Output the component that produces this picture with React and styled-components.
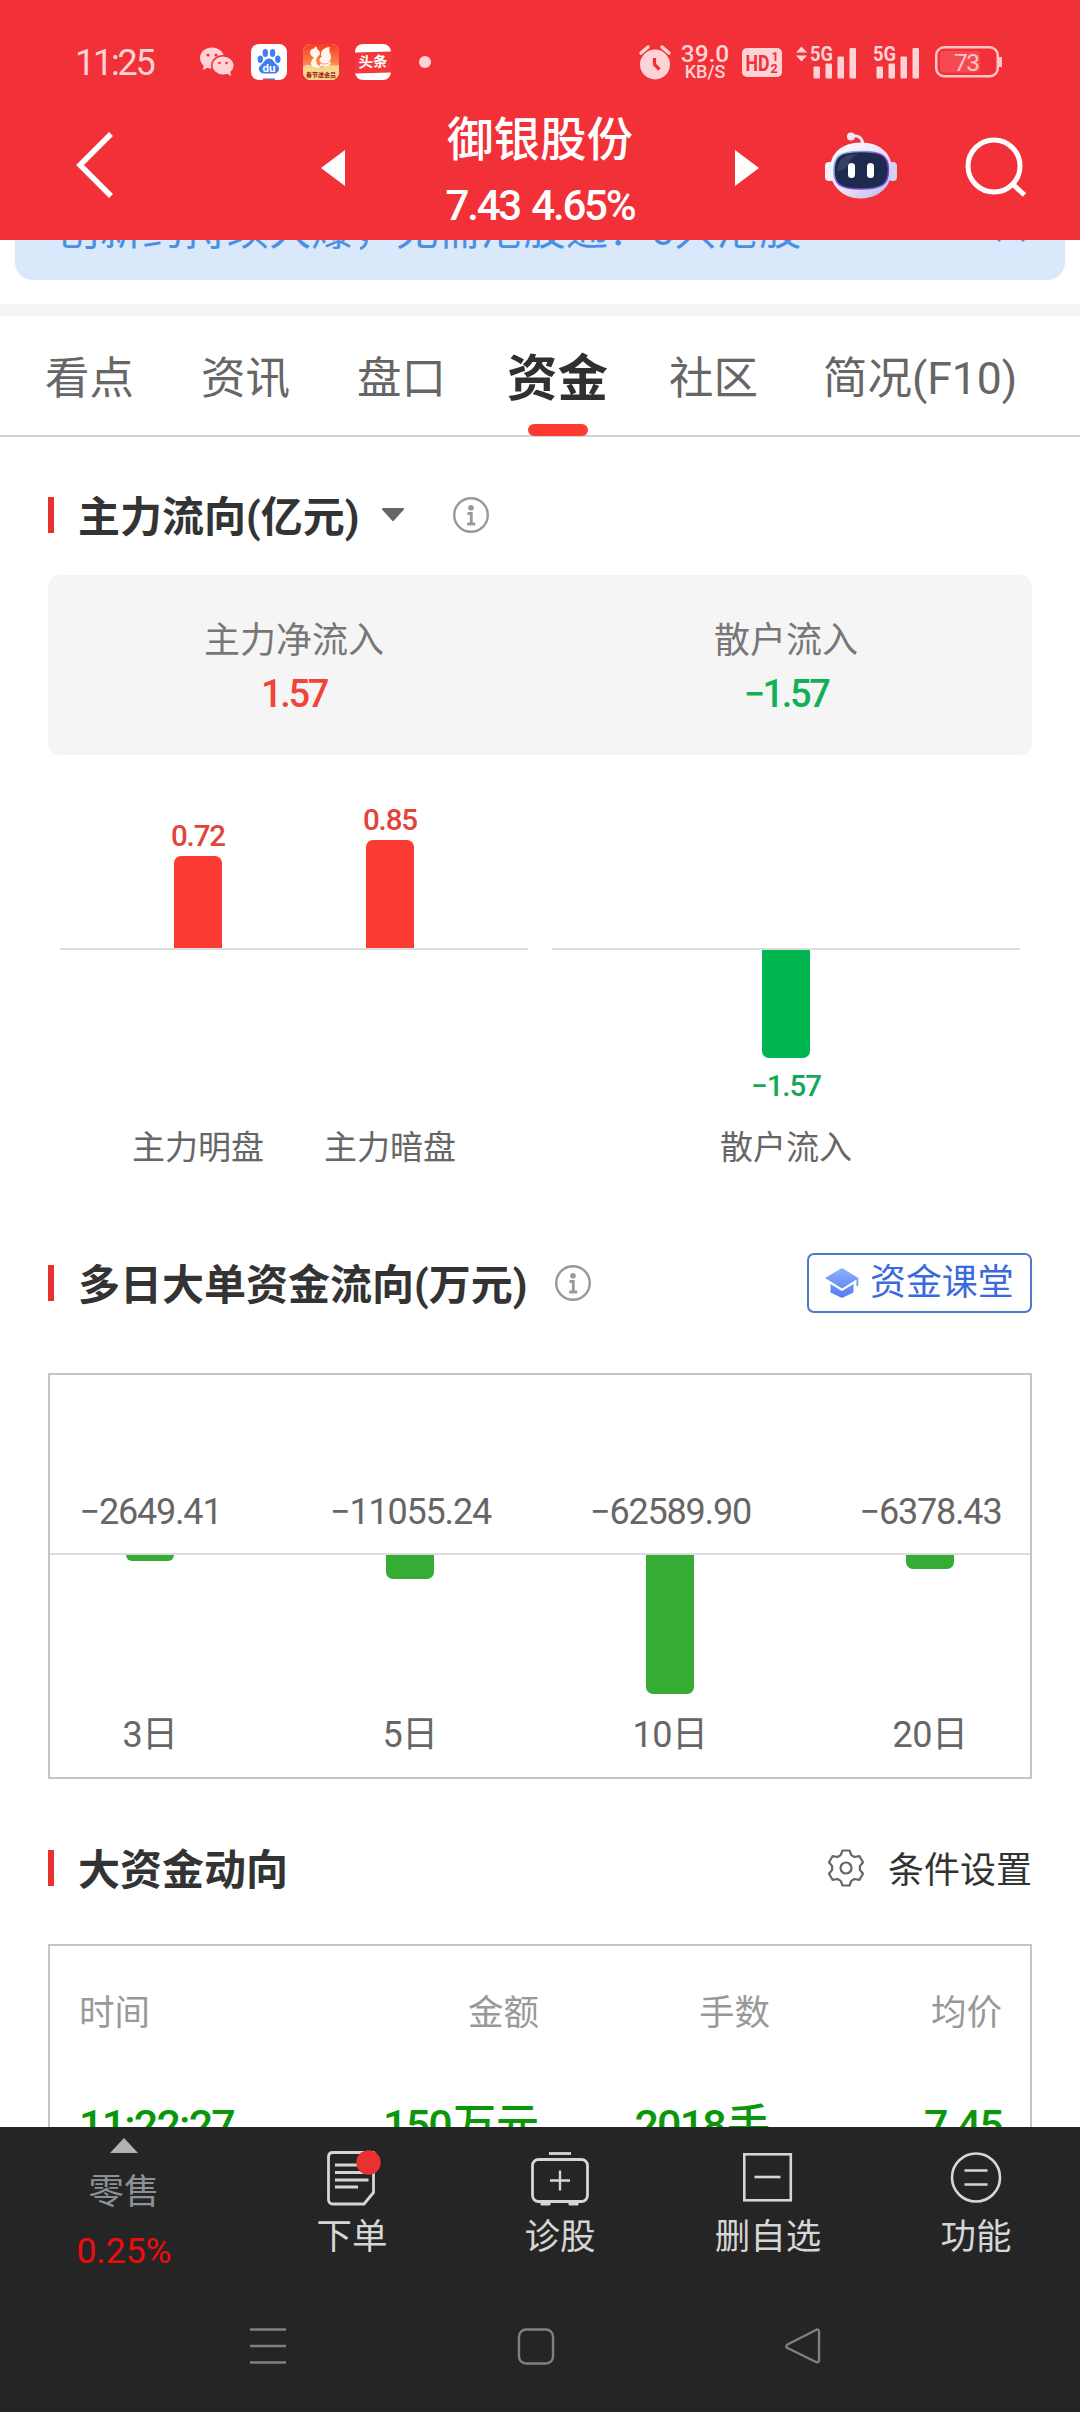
import React from 'react';
import styled, { createGlobalStyle } from 'styled-components';

const GlobalStyle = createGlobalStyle`
  *, *::before, *::after { box-sizing: border-box; }
  body { margin: 0; background: #fff; }
  svg { display: block; flex: none; overflow: visible; }
`;

const Screen = styled.div`
  width: 1080px;
  height: 2412px;
  display: flex;
  flex-direction: column;
  overflow: hidden;
  background: #fff;
  color: #333;
  font-family: Roboto, 'Noto Sans CJK SC', sans-serif;
  white-space: nowrap;
`;

/* ---------- status bar and title ---------- */

const Top = styled.header`
  height: 240px;
  flex: none;
  background: #f23038;
  color: #fff;
`;

const StatusBar = styled.div`
  height: 104px;
  padding: 20px 77px 0 75px;
  display: flex;
  align-items: center;
  justify-content: space-between;
  color: #ffd3d5;
`;

const StatusGroup = styled.div`
  display: flex;
  align-items: center;
  gap: ${(p) => p.$gap || 0}px;
`;

const Clock = styled.span`
  width: 86px;
  margin-right: 38px;
  padding-top: 2px;
  font-size: 36px;
  line-height: 40px;
  letter-spacing: -2.2px;
`;

const Dot = styled.i`
  width: 12px;
  height: 12px;
  margin-left: 12px;
  border-radius: 50%;
  background: #ffd3d5;
`;

const AppTile = styled.span`
  width: 36px;
  height: 36px;
  border-radius: 8px;
  overflow: hidden;
  background: #fff;
`;

const ToutiaoTile = styled(AppTile)`
  display: flex;
  align-items: center;
`;

const ToutiaoBand = styled.span`
  width: 36px;
  height: 21px;
  background: #f2383c;
  color: #fff;
  font-size: 14.5px;
  font-weight: 700;
  line-height: 22px;
  text-align: center;
  transform: skewY(-1.5deg);
`;

const Speed = styled.span`
  width: 50px;
  display: flex;
  flex-direction: column;
  align-items: center;
  font-weight: 500;
`;

const SpeedValue = styled.span`
  font-size: 24.5px;
  line-height: 19px;
`;

const SpeedUnit = styled.span`
  font-size: 18px;
  line-height: 17px;
`;

const TitleBar = styled.div`
  height: 136px;
  display: grid;
  grid-template-columns: 321px 24px 390px 24px 66px 72px 54px 129px;
  align-items: start;
`;

const Slot = styled.div`
  padding-top: ${(p) => p.$top}px;
  padding-left: ${(p) => p.$left || 0}px;
`;

const StockTitle = styled.div`
  display: flex;
  flex-direction: column;
  align-items: center;
  padding-top: 6px;
`;

const StockName = styled.div`
  font-size: 46.5px;
  font-weight: 500;
  line-height: 60px;
`;

const StockPrice = styled.div`
  margin-top: 7px;
  font-size: 42px;
  font-weight: 500;
  line-height: 58px;
  letter-spacing: -2.2px;
  word-spacing: 3px;
`;

/* ---------- scrolled content ---------- */

const Content = styled.main`
  height: 1887px;
  flex: none;
  overflow: hidden;
`;

const Notice = styled.div`
  height: 40px;
  margin: 0 15px;
  padding: 0 40px 0 42px;
  display: flex;
  align-items: flex-end;
  justify-content: space-between;
  overflow: hidden;
  border-radius: 0 0 18px 18px;
  background: #d9e8fb;
  color: #4a90e2;
`;

const NoticeText = styled.span`
  font-size: 42.4px;
  line-height: 50px;
  margin-bottom: 24px;
`;

const NoticeClose = styled.span`
  margin-bottom: 38px;
`;

const Divider = styled.div`
  height: 12px;
  margin-top: 24px;
  background: #f4f4f4;
`;

const Tabs = styled.nav`
  height: 121px;
  padding-left: 45px;
  display: grid;
  grid-template-columns: 156px 156px 150px 162px 154px auto;
  border-bottom: 2px solid #d2d2d2;
`;

const Tab = styled.a`
  height: 120px;
  display: flex;
  flex-direction: column;
  justify-self: start;
  align-items: center;
  color: ${(p) => (p.$active ? '#303030' : '#666')};
  font-size: ${(p) => (p.$active ? 50.5 : 44.5)}px;
  font-weight: ${(p) => (p.$active ? 700 : 400)};
  line-height: 126px;

  &::after {
    content: '';
    width: 60px;
    height: 12px;
    margin-top: -18px;
    border-radius: 6px;
    background: ${(p) => (p.$active ? '#fc3c32' : 'transparent')};
  }
`;

const SectionHead = styled.div`
  height: 60px;
  margin: ${(p) => p.$top}px 48px 0;
  display: flex;
  align-items: center;
`;

const Mark = styled.i`
  width: 6px;
  height: 36px;
  margin-right: 24px;
  background: #e83232;
`;

const SectionTitle = styled.h2`
  margin: 6px 0 0;
  font-size: 42px;
  font-weight: 700;
  line-height: 60px;
  color: #333;
`;

const Gap = styled.span`
  width: ${(p) => p.$w}px;
  flex: none;
`;

const Push = styled.span`
  flex: 1;
`;

const ClassButton = styled.button`
  width: 225px;
  height: 60px;
  padding: 0 0 0 16px;
  display: flex;
  align-items: center;
  gap: 11px;
  border: 2px solid #4d78cc;
  border-radius: 7px;
  background: #fff;
  color: #3b69de;
  font: inherit;
  font-size: 35.9px;
  line-height: 56px;
`;

const SettingLink = styled.a`
  display: flex;
  align-items: center;
  gap: 23px;
  font-size: 36px;
  line-height: 44px;
  color: #333;

  span { margin-top: 6px; }
`;

const Summary = styled.div`
  height: 180px;
  margin: 30px 48px 0;
  display: grid;
  grid-template-columns: 1fr 1fr;
  border-radius: 12px;
  background: #f5f5f5;
`;

const SummaryCell = styled.div`
  padding-top: 42px;
  display: flex;
  flex-direction: column;
  align-items: center;
`;

const SummaryLabel = styled.span`
  font-size: 36px;
  line-height: 48px;
  color: #777;
`;

const SummaryValue = styled.span`
  margin-top: 5px;
  font-size: 38px;
  font-weight: 500;
  line-height: 48px;
  letter-spacing: -2.4px;
  color: ${(p) => p.$color};
`;

const FlowCharts = styled.div`
  height: 408px;
  margin: 40px 60px 0;
  display: grid;
  grid-template-columns: 468px 468px;
  gap: 24px;
`;

const FlowChart = styled.div`
  display: grid;
  grid-template-rows: 155px 146px 1fr;
  grid-template-columns: ${(p) => p.$columns};
`;

const Upper = styled.div`
  display: flex;
  flex-direction: column;
  align-items: center;
  justify-content: flex-end;
  border-bottom: 2px solid #dcdcdc;
`;

const Lower = styled.div`
  display: flex;
  flex-direction: column;
  align-items: center;
  gap: 8px;
`;

const Bar = styled.div`
  width: 48px;
  height: ${(p) => p.$h}px;
  flex: none;
  background: ${(p) => p.$color};
  border-radius: ${(p) => (p.$down ? '0 0 7px 7px' : '7px 7px 0 0')};
`;

const BarValue = styled.span`
  font-size: 29.5px;
  font-weight: 500;
  line-height: 40px;
  letter-spacing: -1.1px;
  color: ${(p) => p.$color};
`;

const BarLabel = styled.span`
  padding-top: 30px;
  text-align: center;
  font-size: 33px;
  line-height: 44px;
  color: #666;
`;

const DaysBox = styled.div`
  height: 406px;
  margin: 60px 48px 0;
  border: 2px solid #c4c4c4;
  display: grid;
  grid-template-rows: 180px 148px 1fr;
`;

const DaysRow = styled.div`
  padding-left: 30px;
  display: grid;
  grid-template-columns: repeat(4, 140px);
  gap: 120px;
  align-items: ${(p) => (p.$end ? 'end' : 'start')};
  border-bottom: ${(p) => (p.$end ? '2px solid #dcdcdc' : '0')};
`;

const Center = styled.div`
  display: flex;
  justify-content: center;
`;

const DayValue = styled.span`
  margin-bottom: 19px;
  padding-left: 1px;
  font-size: 36px;
  line-height: 44px;
  letter-spacing: -1.2px;
  color: #666;
`;

const DayLabel = styled.span`
  margin-top: 8px;
  font-size: 36px;
  line-height: 48px;
  letter-spacing: -0.5px;
  color: #666;
`;

const Trades = styled.div`
  height: 400px;
  margin: 46px 48px 0;
  padding: 42px 28px 0 29px;
  border: 2px solid #c4c4c4;
  border-bottom: 0;
`;

const TradeRow = styled.div`
  display: grid;
  grid-template-columns: 230px 230px 231px 232px;
  text-align: right;
  font-size: ${(p) => (p.$head ? 35.5 : 43)}px;
  font-weight: ${(p) => (p.$head ? 400 : 500)};
  line-height: ${(p) => (p.$head ? 50 : 60)}px;
  letter-spacing: ${(p) => (p.$head ? 0 : -1.8)}px;
  margin-bottom: 57px;
  color: ${(p) => (p.$head ? '#999' : '#0a980a')};

  & > :first-child { text-align: left; }
`;

const Unit = styled.span`
  margin-left: 2px;
  letter-spacing: 0;
`;

/* ---------- bottom bars ---------- */

const Bottom = styled.footer`
  height: 285px;
  flex: none;
  background: #252525;
  color: #d6d6d6;
`;

const Actions = styled.div`
  height: 163px;
  display: grid;
  grid-template-columns: 248px repeat(4, 208px);
`;

const Action = styled.div`
  padding-top: 20px;
  display: flex;
  flex-direction: column;
  align-items: center;
  font-size: 35.5px;
  line-height: 48px;
`;

const ActionIcon = styled.div`
  height: 66px;
`;

const Sector = styled.div`
  padding-top: 11px;
  display: flex;
  flex-direction: column;
  align-items: center;
  font-size: 35.5px;
  line-height: 48px;
  color: #8b9197;
`;

const SectorName = styled.span`
  margin-top: 15px;
`;

const SectorChange = styled.span`
  margin-top: 11px;
  color: #f00c0c;
`;

const SystemNav = styled.div`
  padding: 36px 0 0 248px;
  display: flex;
  gap: 228px;
`;

/* ---------- drawings ---------- */

const WeChat = () => (
  <svg width="36" height="30" viewBox="0 0 36 30">
    <ellipse cx="13" cy="11" rx="12" ry="10.5" fill="#ffd3d5" />
    <path d="M5 17l-1 6 6-3z" fill="#ffd3d5" />
    <ellipse cx="24" cy="18.5" rx="11.3" ry="9.8" fill="#ffd3d5" stroke="#f23038" strokeWidth="1.5" />
    <path d="M27 26l5 3-1-6z" fill="#ffd3d5" />
    <g fill="#f23038">
      <circle cx="9" cy="8" r="1.6" /><circle cx="17" cy="8" r="1.6" />
      <circle cx="20.5" cy="16" r="1.3" /><circle cx="27.5" cy="16" r="1.3" />
    </g>
  </svg>
);

const Baidu = () => (
  <svg width="36" height="36" viewBox="0 0 36 36">
    <g fill="#3f7df0">
      <ellipse cx="9.3" cy="15.3" rx="2.7" ry="3.7" />
      <ellipse cx="14.3" cy="9" rx="2.7" ry="3.9" />
      <ellipse cx="21.6" cy="9" rx="2.7" ry="3.9" />
      <ellipse cx="26.8" cy="15.3" rx="2.7" ry="3.7" />
      <path d="M18 14.5c3.500 0 4.500 3 6.500 5s4 3.300 3.500 6-2.500 4-5 4h-10c-2.500 0-4.500-1.300-5-4s1.500-4 3.500-6 3-5 6.500-5z" />
      <path d="M12 36v-1.500h7V36z" fill="#e0405a" /><path d="M18 36v-1.500h6V36z" />
    </g>
    <text x="18" y="27.500" fontFamily="Roboto" fontSize="11.500" fontWeight="700" fill="#fff" textAnchor="middle">du</text>
  </svg>
);

const Squirrel = () => (
  <svg width="36" height="36" viewBox="0 0 36 36">
    <defs>
      <linearGradient id="sq" x1="0" y1="0" x2="0" y2="1">
        <stop offset="0" stopColor="#f73a22" />
        <stop offset=".55" stopColor="#f98a4a" />
        <stop offset="1" stopColor="#fbd98c" />
      </linearGradient>
    </defs>
    <rect width="36" height="36" fill="url(#sq)" />
    <path d="M0 23q4-4 8-1 5 3 11 2 5-4 9-3t8 0v15H0z" fill="#fbd68a" />
    <path d="M7 8.500Q7 5 11 4.500L13 2l1.500 3.500Q18 7.500 16.500 11q-4.500 3.500-3 8 1.500 3.500 6 4-7 2.500-11-1-2-4 2.500-8.500Q7.500 12 7 8.500z" fill="#fff6ec" />
    <path d="M18 9.500q1-6 9-6.500-1.500 4 .5 7 2 6-3 9-6 2-8-2-.5-3 2.500-4.500-1.500-1-1-3z" fill="#fff6ec" />
    <path d="M17 20.500q7 3 10.500-2.500" fill="none" stroke="#fff6ec" strokeWidth="2" />
    <text x="18" y="33" fontFamily="Noto Sans CJK SC" fontSize="6" fontWeight="700" fill="#8c1510" textAnchor="middle">春节送会员</text>
  </svg>
);

const Alarm = () => (
  <svg width="32" height="36" viewBox="0 0 32 36">
    <circle cx="16" cy="20.500" r="15" fill="#ffd3d5" />
    <path d="M2 9l7-6M30 9l-7-6" stroke="#ffd3d5" strokeWidth="3.500" strokeLinecap="round" />
    <path d="M15.500 14v6.500l5 5" fill="none" stroke="#f23038" strokeWidth="3.200" />
  </svg>
);

const HdBadge = () => (
  <svg width="40" height="29" viewBox="0 0 40 29">
    <rect width="40" height="29" rx="5" fill="#ffd3d5" />
    <g fontFamily="Roboto" fontWeight="700" fill="#f23038">
      <text x="3.500" y="22.500" fontSize="22" textLength="24" lengthAdjust="spacingAndGlyphs">HD</text>
      <text x="29.500" y="13" fontSize="12.500">1</text>
      <text x="28.500" y="25" fontSize="12.500">2</text>
    </g>
  </svg>
);

const Signal = ({ arrows }) => (
  <svg width={arrows ? 62 : 48} height="34" viewBox={arrows ? '-14 0 62 34' : '0 0 48 34'}>
    <g fill="#ffd3d5">
      {arrows && <path d="M-14 7.500l5.500-6 5.500 6zM-14 10.500l5.500 6 5.500-6z" />}
      <text x="0" y="16" fontFamily="Roboto" fontSize="20.500" fontWeight="700" textLength="23" lengthAdjust="spacingAndGlyphs">5G</text>
      <rect x="3.500" y="21.500" width="6.500" height="12" rx="1" />
      <rect x="15.500" y="18.500" width="6.500" height="15" rx="1" />
      <rect x="27.500" y="11.500" width="6.500" height="22" rx="1" />
      <rect x="39.500" y="3" width="6.500" height="30.500" rx="1" />
    </g>
  </svg>
);

const Battery = () => (
  <svg width="68" height="32" viewBox="0 0 68 32">
    <rect x="1.250" y="1.250" width="61.500" height="29" rx="8" fill="none" stroke="#ffc4c7" strokeWidth="2.500" />
    <rect x="5" y="5" width="40" height="21.500" rx="4" fill="#f6484f" />
    <path d="M65.500 11v10" stroke="#ffc4c7" strokeWidth="3" />
    <text x="32" y="24.500" fontFamily="Roboto" fontSize="24.500" fill="#ffc4c7" textAnchor="middle" textLength="26">73</text>
  </svg>
);

const Robot = () => (
  <svg width="74" height="68" viewBox="0 0 74 68">
    <defs>
      <linearGradient id="head" x1="0" y1="0" x2="1" y2="1">
        <stop offset="0" stopColor="#fff" />
        <stop offset=".55" stopColor="#e6e2f8" />
        <stop offset="1" stopColor="#b9b4e6" />
      </linearGradient>
      <linearGradient id="rim" x1="0" y1="0" x2="1" y2="1">
        <stop offset="0" stopColor="#8fe0f2" />
        <stop offset=".5" stopColor="#8a3fe0" />
        <stop offset="1" stopColor="#5a55e8" />
      </linearGradient>
    </defs>
    <path d="M26 4q11-2 12 9" fill="none" stroke="#e9e4f6" strokeWidth="3" />
    <circle cx="26" cy="4.500" r="4" fill="#ece8f8" />
    <rect x="0" y="30" width="9" height="19" rx="4" fill="#f4f2fc" />
    <rect x="63.500" y="30" width="8.500" height="19" rx="4" fill="#d6d0f2" />
    <path d="M36 10.500c20 0 31 12 31 27S55 66.500 36 66.500 5 53 5 37.500s11-27 31-27z" fill="url(#head)" />
    <path d="M36 19.500c21 0 27.500 4 27.500 18.500S57 57 36 57 9 52.500 9 38s6-18.500 27-18.500z" fill="#1e2a4c" stroke="url(#rim)" strokeWidth="1.500" />
    <path d="M14 31q4-9 20-9-8 2-10 9t-12 8z" fill="#46506f" opacity=".6" />
    <rect x="23" y="31" width="7" height="15" rx="3.500" fill="#fff" />
    <rect x="42" y="31" width="7" height="15" rx="3.500" fill="#fff" />
  </svg>
);

const Info = () => (
  <svg width="36" height="36" viewBox="0 0 36 36" fill="none" stroke="#999" strokeWidth="2.400">
    <circle cx="18" cy="18" r="16.800" />
    <circle cx="18" cy="10.800" r="2.800" fill="#999" stroke="none" />
    <path d="M14.500 16.500h3.800v10M14.200 27h8" strokeWidth="2.800" />
  </svg>
);

const Cap = () => (
  <svg width="34" height="32" viewBox="0 0 34 32">
    <defs>
      <linearGradient id="cap" x1="0" y1="0" x2="0" y2="1">
        <stop offset="0" stopColor="#8fb0fb" />
        <stop offset="1" stopColor="#4f7df3" />
      </linearGradient>
    </defs>
    <path d="M17 1L0 11l17 10.500L31.500 12.500V19h1.800V11zM5.500 17v8.500L17 31l11.500-5.500V17L17 24z" fill="url(#cap)" />
  </svg>
);

const Gear = () => (
  <svg width="38" height="38" viewBox="0 0 38 38" fill="none" stroke="#666" strokeWidth="2.200" strokeLinejoin="round">
    <path d="M15.500 1.500h7l1.800 4.600 3.200 1.900 5-.8 3.500 6-3.100 3.900v3.800l3.100 3.900-3.500 6-5-.8-3.200 1.900-1.800 4.600h-7l-1.800-4.600-3.200-1.900-5 .8-3.500-6 3.100-3.900v-3.800L2 13.200l3.500-6 5 .8 3.200-1.900z" />
    <circle cx="19" cy="19" r="5.500" />
  </svg>
);

const OrderIcon = () => (
  <svg width="56" height="60" viewBox="-3 0 56 60" fill="none" stroke="#d6d6d6" strokeWidth="2.800">
    <path d="M6 5.500h40.500v40L37 57H6q-4.500 0-4.500-4.500V10q0-4.500 4.500-4.500z" strokeLinejoin="round" />
    <path d="M8 18h30M8 25.500h30M8 33h33.500M8 40h23" />
    <circle cx="41.500" cy="15.500" r="12.200" fill="#e83232" stroke="none" />
  </svg>
);

const DiagnoseIcon = () => (
  <svg width="58" height="60" viewBox="0 0 58 60" fill="none" stroke="#d6d6d6" strokeWidth="2.800">
    <rect x="1.500" y="12.500" width="55" height="42" rx="6" />
    <path d="M18 6.500h22" />
    <path d="M29 23.500v20M19 33.500h20" strokeWidth="2.400" />
    <path d="M10 55.500h9v2.500h-9zM38 55.500h9v2.500h-9z" fill="#d6d6d6" strokeWidth="1" />
  </svg>
);

const RemoveIcon = () => (
  <svg width="50" height="56" viewBox="0 0 50 56" fill="none" stroke="#d6d6d6" strokeWidth="2.600">
    <rect x="1.300" y="7.300" width="46.500" height="46" />
    <path d="M11.500 30h26" />
  </svg>
);

const MenuIcon = () => (
  <svg width="52" height="58" viewBox="0 0 52 58" fill="none" stroke="#d6d6d6" strokeWidth="2.600">
    <circle cx="26" cy="30.500" r="24" />
    <path d="M14.500 23.500h23M14.500 37.500h23" />
  </svg>
);

/* ---------- data ---------- */

const tabs = ['看点', '资讯', '盘口', '资金', '社区', '简况(F10)'];

const mainFlow = [
  { label: '主力明盘', value: '0.72', h: 92 },
  { label: '主力暗盘', value: '0.85', h: 108 },
];

const days = [
  { label: '3日', value: '−2649.41', h: 6 },
  { label: '5日', value: '−11055.24', h: 24 },
  { label: '10日', value: '−62589.90', h: 139 },
  { label: '20日', value: '−6378.43', h: 14 },
];

const actions = [
  { label: '下单', Icon: OrderIcon },
  { label: '诊股', Icon: DiagnoseIcon },
  { label: '删自选', Icon: RemoveIcon },
  { label: '功能', Icon: MenuIcon },
];

export default function App() {
  return (
    <Screen>
      <GlobalStyle />
      <Top>
        <StatusBar>
          <StatusGroup>
            <Clock>11:25</Clock>
            <StatusGroup $gap={16}>
              <WeChat />
              <AppTile><Baidu /></AppTile>
              <AppTile><Squirrel /></AppTile>
              <ToutiaoTile><ToutiaoBand>头条</ToutiaoBand></ToutiaoTile>
              <Dot />
            </StatusGroup>
          </StatusGroup>
          <StatusGroup>
            <Alarm />
            <Gap $w={9} />
            <Speed><SpeedValue>39.0</SpeedValue><SpeedUnit>KB/S</SpeedUnit></Speed>
            <Gap $w={12} />
            <HdBadge />
            <Gap $w={14} />
            <Signal arrows />
            <Gap $w={15} />
            <Signal />
            <Gap $w={14} />
            <Battery />
          </StatusGroup>
        </StatusBar>
        <TitleBar>
          <Slot $top={27} $left={74}>
            <svg width="42" height="68" viewBox="0 0 42 68">
              <path d="M37 3L6 34l31 31" fill="none" stroke="#fff" strokeWidth="5.500" />
            </svg>
          </Slot>
          <Slot $top={46}><svg width="24" height="36"><path d="M24 0v36L0 18z" fill="#fff" /></svg></Slot>
          <StockTitle>
            <StockName>御银股份</StockName>
            <StockPrice>7.43 4.65%</StockPrice>
          </StockTitle>
          <Slot $top={46}><svg width="24" height="36"><path d="M0 0v36l24-18z" fill="#fff" /></svg></Slot>
          <span />
          <Slot $top={28}><Robot /></Slot>
          <span />
          <Slot $top={30} $left={14}>
            <svg width="64" height="64" viewBox="0 0 64 64" fill="none" stroke="#fff" strokeWidth="5">
              <circle cx="29" cy="32" r="26" />
              <path d="M47.500 50l12 11" />
            </svg>
          </Slot>
        </TitleBar>
      </Top>

      <Content>
        <Notice>
          <NoticeText>创新药持续大爆，无需港股通？6只港股</NoticeText>
          <NoticeClose>
            <svg width="28" height="28" viewBox="0 0 28 28">
              <path d="M1 1l26 26M27 1L1 27" stroke="#4a90e2" strokeWidth="3" />
            </svg>
          </NoticeClose>
        </Notice>
        <Divider />
        <Tabs>
          {tabs.map((t) => <Tab key={t} $active={t === '资金'}>{t}</Tab>)}
        </Tabs>

        <SectionHead $top={48}>
          <Mark />
          <SectionTitle>主力流向(亿元)</SectionTitle>
          <Gap $w={21} />
          <svg width="26" height="14" viewBox="0 0 26 14">
            <path d="M3 1h20l-10 11z" fill="#666" stroke="#666" strokeWidth="2" strokeLinejoin="round" />
          </svg>
          <Gap $w={47} />
          <Info />
        </SectionHead>
        <Summary>
          <SummaryCell>
            <SummaryLabel>主力净流入</SummaryLabel>
            <SummaryValue $color="#f04438">1.57</SummaryValue>
          </SummaryCell>
          <SummaryCell>
            <SummaryLabel>散户流入</SummaryLabel>
            <SummaryValue $color="#12b055">−1.57</SummaryValue>
          </SummaryCell>
        </Summary>
        <FlowCharts>
          <FlowChart $columns="42px 192px 192px 42px">
            <Upper />
            {mainFlow.map((m) => (
              <Upper key={m.label}>
                <BarValue $color="#e2443c">{m.value}</BarValue>
                <Bar $h={m.h} $color="#fc3c32" />
              </Upper>
            ))}
            <Upper />
            <Lower /><Lower /><Lower /><Lower />
            <span />
            {mainFlow.map((m) => <BarLabel key={m.label}>{m.label}</BarLabel>)}
          </FlowChart>
          <FlowChart $columns="468px">
            <Upper />
            <Lower>
              <Bar $down $h={108} $color="#00b650" />
              <BarValue $color="#16a858">−1.57</BarValue>
            </Lower>
            <BarLabel>散户流入</BarLabel>
          </FlowChart>
        </FlowCharts>

        <SectionHead $top={50}>
          <Mark />
          <SectionTitle>多日大单资金流向(万元)</SectionTitle>
          <Gap $w={28} />
          <Info />
          <Push />
          <ClassButton><Cap />资金课堂</ClassButton>
        </SectionHead>
        <DaysBox>
          <DaysRow $end>
            {days.map((d) => <Center key={d.label}><DayValue>{d.value}</DayValue></Center>)}
          </DaysRow>
          <DaysRow>
            {days.map((d) => <Center key={d.label}><Bar $down $h={d.h} $color="#35ad35" /></Center>)}
          </DaysRow>
          <DaysRow>
            {days.map((d) => <Center key={d.label}><DayLabel>{d.label}</DayLabel></Center>)}
          </DaysRow>
        </DaysBox>

        <SectionHead $top={59}>
          <Mark />
          <SectionTitle>大资金动向</SectionTitle>
          <Push />
          <SettingLink><Gear /><span>条件设置</span></SettingLink>
        </SectionHead>
        <Trades>
          <TradeRow $head>
            <span>时间</span><span>金额</span><span>手数</span><span>均价</span>
          </TradeRow>
          <TradeRow>
            <span>11:22:27</span>
            <span>150<Unit>万元</Unit></span>
            <span>2018<Unit>手</Unit></span>
            <span>7.45</span>
          </TradeRow>
        </Trades>
      </Content>

      <Bottom>
        <Actions>
          <Sector>
            <svg width="28" height="15"><path d="M14 0l14 15H0z" fill="#b2b2b2" /></svg>
            <SectorName>零售</SectorName>
            <SectorChange>0.25%</SectorChange>
          </Sector>
          {actions.map(({ label, Icon }) => (
            <Action key={label}>
              <ActionIcon><Icon /></ActionIcon>
              {label}
            </Action>
          ))}
        </Actions>
        <SystemNav>
          <svg width="40" height="40" viewBox="0 0 40 40" fill="none" stroke="#808080" strokeWidth="2.600">
            <path d="M2 3.500h36M2 20h36M2 36.500h36" />
          </svg>
          <svg width="40" height="40" viewBox="0 0 40 40" fill="none" stroke="#808080" strokeWidth="2.400">
            <rect x="3" y="3.500" width="34" height="34" rx="7" />
          </svg>
          <svg width="40" height="40" viewBox="0 0 40 40" fill="none" stroke="#808080" strokeWidth="2.400" strokeLinejoin="round">
            <path d="M33 3.500Q35 3 35 6V34Q35 37 32 36L3.500 22Q1 20 3.500 18.500z" />
          </svg>
        </SystemNav>
      </Bottom>
    </Screen>
  );
}
